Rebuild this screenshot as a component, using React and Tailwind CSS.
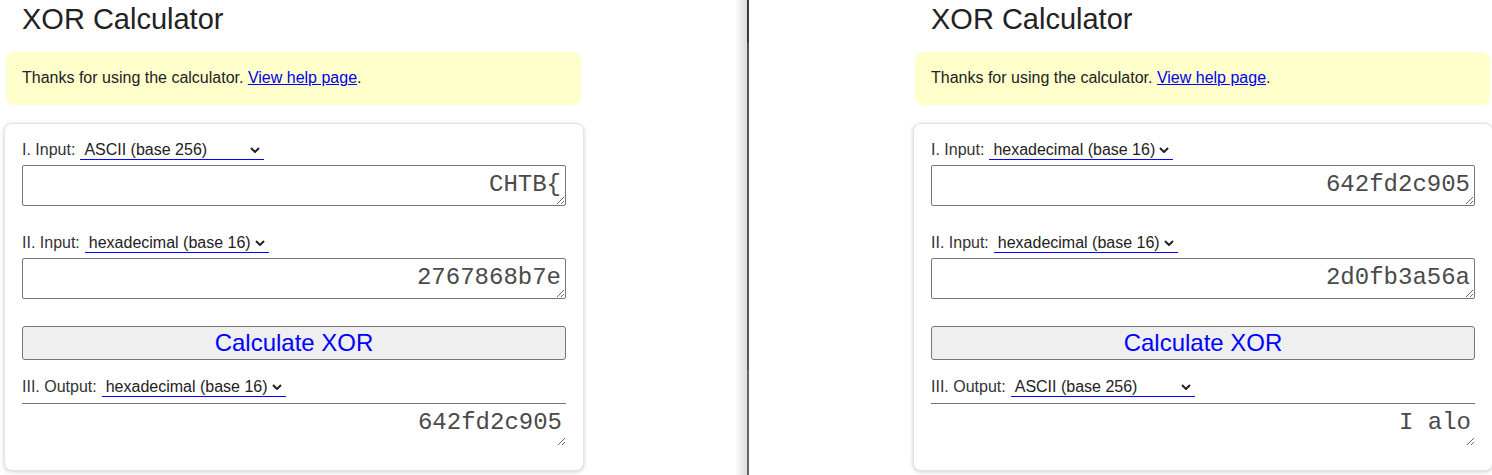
import React from 'react';

// one calculator window, drawn twice side by side
function Chevron() {
  return (
    <svg width="10" height="6" viewBox="0 0 10 6" className="shrink-0">
      <path d="M1 1 L5 5 L9 1" fill="none" stroke="#222" strokeWidth="2" />
    </svg>
  );
}

function BaseSelect({ value }) {
  return (
    <div className="ml-[5px] flex h-[19px] w-[184px] items-center justify-between border-b border-[#0000ff] px-[4px] text-[16px] leading-[18px] text-[#222]">
      <span className="whitespace-nowrap">{value}</span>
      <Chevron />
    </div>
  );
}

function FieldRow({ label, base }) {
  return (
    <div className="flex h-[19px] items-start text-[16px] leading-[18px] text-[#333]">
      <span className="whitespace-nowrap">{label}</span>
      <BaseSelect value={base} />
    </div>
  );
}

const boxText = "pl-[4px] pr-[4px] pt-[5px] text-right font-['Liberation_Mono',monospace] text-[24px] leading-[28px] text-[#4a4a4a] outline-none";

function Calculator({ inputs, output }) {
  return (
    <div className="w-[584px] shrink-0 font-['Liberation_Sans',Arial,sans-serif]">
      <h1 className="ml-[22px] mt-[3px] text-[29px] leading-[32px] text-[#222]">XOR Calculator</h1>

      <div className="ml-[6px] mt-[17px] w-[575px] rounded-lg bg-[#ffffcc] pl-[16px] pt-[14px] pb-[15px] text-[16px] leading-[24px] text-[#222]">
        Thanks for using the calculator.{' '}
        <a href="#" className="text-[#0000ee] underline">View help page</a>.
      </div>

      <div className="ml-[4px] mt-[18px] w-[580px] rounded-lg border border-[#e4e4e4] bg-white px-[17px] pt-[17px] pb-[24px] shadow-[0_1px_4px_rgba(0,0,0,0.18)]">
        <FieldRow label="I. Input:" base={inputs[0].base} />
        <textarea
          readOnly
          value={inputs[0].value}
          className={`mt-[5px] block h-[41px] w-full rounded-[2px] border border-[#767676] ${boxText}`}
        />

        <div className="mt-[28px]">
          <FieldRow label="II. Input:" base={inputs[1].base} />
        </div>
        <textarea
          readOnly
          value={inputs[1].value}
          className={`mt-[5px] block h-[41px] w-full rounded-[2px] border border-[#767676] ${boxText}`}
        />

        <button className="mt-[27px] block h-[34px] w-full rounded-[3px] border border-[#767676] bg-[#efefef] text-[24px] leading-[28px] text-[#0000ff]">
          Calculate XOR
        </button>

        <div className="mt-[18px]">
          <FieldRow label="III. Output:" base={output.base} />
        </div>
        <textarea
          readOnly
          value={output.value}
          className={`mt-[6px] block h-[43px] w-full border-t border-[#767676] ${boxText}`}
        />
      </div>
    </div>
  );
}

export default function App() {
  return (
    <div className="flex h-[475px] w-[1492px] overflow-hidden bg-white">
      <div className="flex w-[747px] shrink-0">
        <Calculator
          inputs={[
            { base: 'ASCII (base 256)', value: 'CHTB{' },
            { base: 'hexadecimal (base 16)', value: '2767868b7e' },
          ]}
          output={{ base: 'hexadecimal (base 16)', value: '642fd2c905' }}
        />
        <div className="ml-auto w-[12px] bg-linear-to-r from-white to-[#dcdcdc]" />
      </div>

      {/* window edge */}
      <div className="flex w-[2px] shrink-0 flex-col">
        <div className="h-[43px] bg-[#3a3a3a]" />
        <div className="flex-1 bg-[#555]" />
        <div className="h-[105px] bg-[#666]" />
      </div>

      <div className="flex flex-1 pl-[160px]">
        <Calculator
          inputs={[
            { base: 'hexadecimal (base 16)', value: '642fd2c905' },
            { base: 'hexadecimal (base 16)', value: '2d0fb3a56a' },
          ]}
          output={{ base: 'ASCII (base 256)', value: 'I alo' }}
        />
      </div>
    </div>
  );
}
